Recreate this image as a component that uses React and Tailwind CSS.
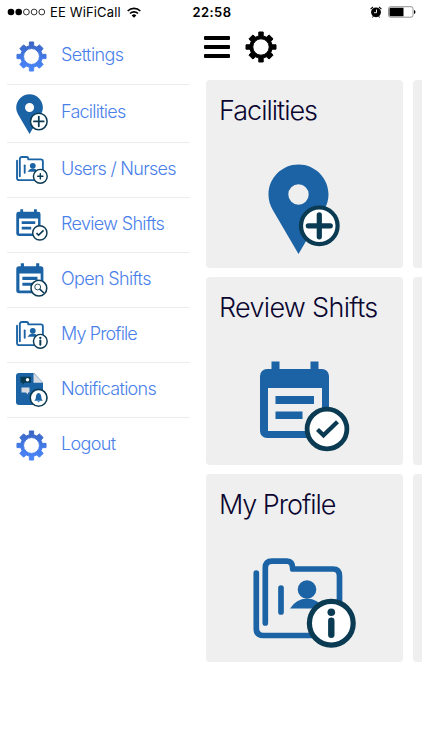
const NAVY = "#0b3a53";
const BLUE = "#1b63a5";

function Gear({ className, fill = "#000" }) {
  return (
    <svg viewBox="-16 -16 32 32" className={className}>
      <defs>
        <linearGradient id="gearBlue" gradientUnits="userSpaceOnUse" x1="0" y1="-15" x2="0" y2="15">
          <stop offset="0" stopColor="#3a63c0" />
          <stop offset="0.6" stopColor="#447ceb" />
          <stop offset="1" stopColor="#4a86f7" />
        </linearGradient>
      </defs>
      <path
        fill={fill}
        stroke={fill}
        strokeWidth="1"
        strokeLinejoin="round"
        d="M-2.200-15H2.200V-11.100L5.400-9.800L8.200-12L12-8.200L9.800-5.400L11.100-2.200H15V2.200H11.100L9.800 5.400L12 8.200L8.200 12L5.400 9.800L2.200 11.100V15H-2.200V11.100L-5.400 9.800L-8.200 12L-12 8.200L-9.800 5.400L-11.100 2.200H-15V-2.200H-11.100L-9.800-5.400L-12-8.200L-8.200-12L-5.400-9.800L-2.200-11.100ZM0-8.200A8.200 8.200 0 1 0 0 8.200A8.200 8.200 0 1 0 0-8.200Z"
        fillRule="evenodd"
      />
    </svg>
  );
}

function Badge({ cx, cy, r, ring, children }) {
  return (
    <g transform={`translate(${cx} ${cy})`}>
      <circle r={r - ring / 2} fill="#fff" stroke={NAVY} strokeWidth={ring} />
      {children}
    </g>
  );
}

function PinIcon({ className, small }) {
  return (
    <svg viewBox="0 0 72 90" className={className}>
      <path
        fill={BLUE}
        fillRule="evenodd"
        d="M30.5 0.5C47 .5 60.5 14 60.5 30.5C60.5 36 58.8 41 56.5 45.5L30.5 90L4.5 45.5C2 41 .5 36 .5 30.5C.5 14 14 .5 30.5 .5ZM30.5 20.3a10.2 10.2 0 1 0 0 20.4a10.2 10.2 0 1 0 0-20.4Z"
      />
      <Badge cx={51.3} cy={61.8} r={20.4} ring={small ? 3.4 : 4.2}>
        <path d="M-11 0H11M0-11V11" stroke={NAVY} strokeWidth={small ? 4 : 5.2} strokeLinecap="round" />
      </Badge>
    </svg>
  );
}

function CalendarBody() {
  return (
    <path
      fill={BLUE}
      fillRule="evenodd"
      d="M11.5 0.5h8v7.5h31v-7.5h8v7.5h3.500a7 7 0 0 1 7 7v55a7 7 0 0 1-7 7h-55a7 7 0 0 1-7-7v-55a7 7 0 0 1 7-7h4.500ZM8 27V70h54V27ZM15.500 35h38.500v8h-38.500ZM15.500 50.500h27v7.500h-27Z"
    />
  );
}

function ReviewIcon({ className, small }) {
  return (
    <svg viewBox="0 0 89.500 91" className={className}>
      <CalendarBody />
      <Badge cx={67} cy={68} r={22.3} ring={small ? 4 : 4.8}>
        <path d="M-9.500 .5L-3.500 6.300L10.500-7.200" fill="none" stroke={NAVY} strokeWidth="4.300" />
      </Badge>
    </svg>
  );
}

function OpenShiftIcon({ className }) {
  return (
    <svg viewBox="0 0 80 86.500" className={className}>
      <CalendarBody />
      <Badge cx={57.5} cy={64} r={22} ring={4}>
        <circle cx="-3" cy="-3" r="7.500" fill="none" stroke={NAVY} strokeWidth="2.200" />
        <path d="M3 3L11.500 11" stroke={NAVY} strokeWidth="4" strokeLinecap="round" />
      </Badge>
    </svg>
  );
}

function FolderIcon({ className, small, mark }) {
  return (
    <svg viewBox="0 0 103 90" className={className}>
      <g fill="none" stroke={BLUE} strokeWidth={small ? 6 : 5.7} strokeLinecap="round" strokeLinejoin="round">
        <path d="M3.300 15V70.500Q3.300 77.500 10.300 77.500H60" />
        <path d="M12.300 65V10Q12.300 3.200 19 3.200H34Q39.700 3.200 39.700 11H80Q86.500 11 86.500 18V50" />
        <path d="M28 30V54" />
      </g>
      <circle cx="54" cy="31.500" r="9.300" fill={BLUE} />
      <path d="M37 50.500Q43 41 54 40.500Q65 41 71 50.500Z" fill={BLUE} />
      <Badge cx={78.3} cy={65.2} r={24.5} ring={small ? 4.7 : 5.2}>
        {mark === "plus" ? (
          <path d="M-8.500 0H8.500M0-8.500V8.500" stroke={NAVY} strokeWidth="4.500" strokeLinecap="round" />
        ) : (
          <>
            <circle cy="-11" r="3.800" fill={NAVY} />
            <path d="M0-2.500V11.500" stroke={NAVY} strokeWidth="6.400" strokeLinecap="round" />
          </>
        )}
      </Badge>
    </svg>
  );
}

function NotificationIcon({ className }) {
  return (
    <svg viewBox="0 0 32 34" className={className}>
      <path d="M3 0H18L27 9.500V32H3Q0 32 0 29V3Q0 0 3 0Z" fill={BLUE} />
      <path d="M17.500 0L27 9.800H17.500Z" fill="#d8dce2" />
      <path d="M4.500 3.700H14.800V9.800H8.500L6.500 12V9.800H4.500Z" fill={NAVY} />
      <circle cx="11.500" cy="6.800" r="1.700" fill="#fff" />
      <path d="M5.500 14.500H13.500V19.500H12V21.500L9.800 19.500H5.500Z" fill="#d8dce2" />
      <Badge cx={22.6} cy={24.8} r={9.2} ring={1.6}>
        <path d="M0-4.800C2-4.300 2.600-2.700 2.700-.8C2.800 1.200 3.300 2 4.300 3H-4.300C-3.300 2-2.800 1.200-2.700-.8C-2.600-2.700-2-4.300 0-4.800ZM-1.300 3.500H1.300Q0 5.200-1.300 3.500Z" fill={BLUE} />
      </Badge>
    </svg>
  );
}

const menu = [
  { label: "Settings", row: "h-[57px]", track: "tracking-[-0.56px]", icon: <Gear className="mr-[2px] w-[31px] h-[31px]" fill="url(#gearBlue)" /> },
  { label: "Facilities", row: "h-[58px]", track: "tracking-[-0.76px]", icon: <PinIcon small className="w-8 h-10" /> },
  { label: "Users / Nurses", row: "h-[55px]", track: "tracking-[-0.72px]", icon: <FolderIcon small mark="plus" className="w-8 h-7" /> },
  { label: "Review Shifts", row: "h-[55px]", track: "tracking-[-0.66px]", icon: <ReviewIcon small className="w-8 h-8" /> },
  { label: "Open Shifts", row: "h-[55px]", track: "tracking-[-0.66px]", icon: <OpenShiftIcon className="w-8 h-[34px]" /> },
  { label: "My Profile", row: "h-[55px]", track: "tracking-[-0.86px]", icon: <FolderIcon small mark="info" className="w-8 h-7" /> },
  { label: "Notifications", row: "h-[55px]", track: "tracking-[-0.74px]", icon: <NotificationIcon className="w-8 h-[34px]" /> },
  { label: "Logout", row: "h-[55px]", track: "tracking-[-0.66px]", icon: <Gear className="mr-[2px] w-[31px] h-[31px]" fill="url(#gearBlue)" /> },
];

const cards = [
  { title: "Facilities", pad: "pl-[62px]", track: "tracking-[-1px]", icon: <PinIcon className="w-[72px] h-[90px]" /> },
  { title: "Review Shifts", pad: "pl-[54px]", track: "tracking-[-0.7px]", icon: <ReviewIcon className="w-[89.5px] h-[91px]" /> },
  { title: "My Profile", pad: "pl-[47px]", track: "tracking-[-1.05px]", icon: <FolderIcon mark="info" className="w-[103px] h-[90px]" /> },
];

function StatusBar() {
  return (
    <div className="h-6 grid grid-cols-[1fr_auto_1fr] items-center pl-[7px] pr-[6px] text-black">
      <div className="flex items-center">
        <svg viewBox="0 0 39 8" className="w-[39px] h-2">
          <circle cx="4" cy="4" r="3.300" />
          <circle cx="11.700" cy="4" r="3.300" />
          {[19.4, 27.1, 34.8].map((cx) => (
            <circle key={cx} cx={cx} cy="4" r="2.900" fill="none" stroke="#000" strokeWidth="0.800" />
          ))}
        </svg>
        <span className="ml-1 text-[13px] leading-none tracking-[0.15px]">EE WiFiCall</span>
        <svg viewBox="0 0 14 11" className="ml-[6px] w-[14px] h-[11px]" fill="none" stroke="#000" strokeWidth="1.700">
          <path d="M.7 4A9 9 0 0 1 13.300 4" />
          <path d="M3 6.500A5.700 5.700 0 0 1 11 6.500" />
          <path d="M7 10.700L4.700 8.400A3.200 3.200 0 0 1 9.300 8.400Z" fill="#000" stroke="none" />
        </svg>
      </div>
      <span className="pl-[1px] text-[13px] leading-none font-semibold tracking-[0.4px]">22:58</span>
      <div className="flex items-center justify-end gap-[6px]">
        <svg viewBox="0 0 12 12" className="w-3 h-3">
          <circle cx="6" cy="6.300" r="4.900" />
          <path d="M.6 3.200L3 .9M11.400 3.200L9 .9" stroke="#000" strokeWidth="1.100" />
          <path d="M2.500 11.500L3.500 10M9.500 11.500L8.500 10" stroke="#000" />
          <path d="M6.500 3.500V6.700H4" stroke="#fff" strokeWidth="0.900" fill="none" />
        </svg>
        <svg viewBox="0 0 28 12" className="w-7 h-3">
          <rect x=".5" y=".7" width="24.500" height="10.500" rx="2" fill="#fff" stroke="#777" strokeWidth=".8" />
          <path d="M2.500 1.700H15.500V10.200H2.500Q1.500 10.200 1.500 9.200V2.700Q1.500 1.700 2.500 1.700Z" />
          <path d="M26 4Q27.500 4.500 27.500 6Q27.500 7.500 26 8Z" />
        </svg>
      </div>
    </div>
  );
}

export default function App() {
  return (
    <div className="w-[422px] h-[750px] overflow-hidden bg-white font-['Inter','Liberation_Sans',sans-serif]">
      <StatusBar />
      <div className="flex">
        <nav className="w-[190px] shrink-0 pl-[7px] pt-1">
          <ul className="divide-y divide-[#ececec]">
            {menu.map(({ label, row, track, icon }) => (
              <li key={label} className={`flex items-center ${row}`}>
                <div className="w-[50px] flex justify-center shrink-0">{icon}</div>
                <span className={`ml-1 pb-[3px] text-[18px] font-light leading-6 whitespace-nowrap text-[#4a7fea] ${track}`}>
                  {label}
                </span>
              </li>
            ))}
          </ul>
        </nav>

        <main className="flex-1 min-w-0 pl-[14px]">
          <header className="h-14 flex items-start pt-[7px]">
            <div className="mt-[5px] w-[26px] flex flex-col gap-[4.5px]">
              <div className="h-[4.3px] rounded-[1px] bg-black" />
              <div className="h-[4.3px] rounded-[1px] bg-black" />
              <div className="h-[4.3px] rounded-[1px] bg-black" />
            </div>
            <Gear className="ml-[15px] w-8 h-8" />
          </header>

          <div className="ml-[2px] grid grid-cols-[197px_197px] gap-x-[9.5px] gap-y-[9.7px]">
            {cards.map(({ title, pad, track, icon }) => (
              <div key={title} className="contents">
                <section className="h-[187.5px] rounded-[4px] bg-[#efefef]">
                  <h2 className={`pt-[14px] pl-[13px] text-[27px] font-light leading-[34px] whitespace-nowrap text-[#0b0630] ${track}`}>
                    {title}
                  </h2>
                  <div className={`pt-9 ${pad}`}>{icon}</div>
                </section>
                <section className="h-[187.5px] rounded-[4px] bg-[#efefef]" />
              </div>
            ))}
          </div>
        </main>
      </div>
    </div>
  );
}
